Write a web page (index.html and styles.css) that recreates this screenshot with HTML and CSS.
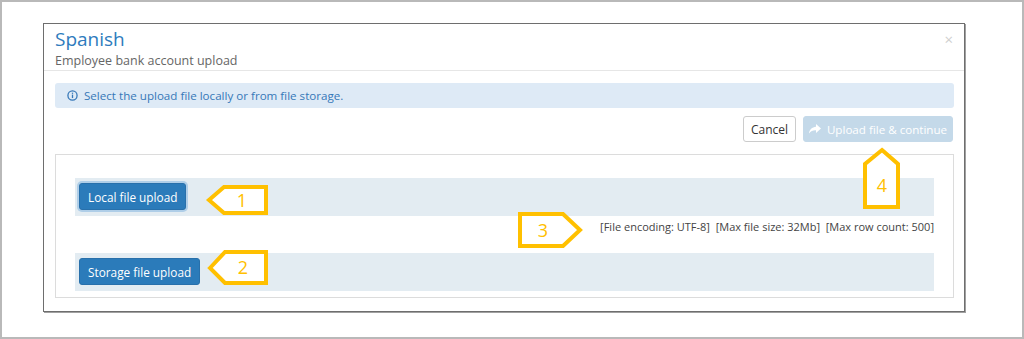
FILE: index.html
```html
<!DOCTYPE html>
<html lang="en">
<head>
<meta charset="utf-8">
<title>Employee bank account upload</title>
<link rel="stylesheet" href="styles.css">
</head>
<body>
<div class="frame">
  <div class="dialog">
    <div class="dialog-header">
      <span class="close">&times;</span>
      <div class="title">Spanish</div>
      <div class="subtitle">Employee bank account upload</div>
    </div>
    <div class="dialog-body">
      <div class="alert">
        <svg class="info-icon" width="11" height="11" viewBox="0 0 12 12"><circle cx="6" cy="6" r="5" fill="none" stroke="#3678b8" stroke-width="1.4"/><rect x="5.3" y="5" width="1.4" height="3.8" fill="#3678b8"/><rect x="5.3" y="2.9" width="1.4" height="1.3" fill="#3678b8"/></svg>
        <span>Select the upload file locally or from file storage.</span>
      </div>
      <div class="actions">
        <button class="btn btn-default">Cancel</button>
        <button class="btn btn-disabled">
          <svg class="share-icon" width="12" height="10" viewBox="0 0 12 10"><path d="M7 0 L12 4.5 L7 9 L7 6.3 C4 6.2 1.8 7 0 9.5 C0.5 5.5 3 3.2 7 2.8 Z" fill="#fff"/></svg>
          <span>Upload file &amp; continue</span>
        </button>
      </div>
      <div class="panel">
        <div class="row">
          <button class="btn btn-primary focus">Local file upload</button>
        </div>
        <div class="info-line">[File encoding: UTF-8]&nbsp; [Max file size: 32Mb]&nbsp; [Max row count: 500]</div>
        <div class="row">
          <button class="btn btn-primary">Storage file upload</button>
        </div>
      </div>
    </div>
  </div>
  <svg class="callouts" width="1024" height="339" viewBox="0 0 1024 339">
    <g fill="#fff" stroke="#ffc000" stroke-width="4" stroke-linejoin="miter">
      <polygon points="209,200 224,187 266,187 266,213 224,213"/>
      <polygon points="210,268 225,252 266,252 266,283 225,283"/>
      <polygon points="520,214 563,214 580,230 563,246 520,246"/>
      <polygon points="882,150 898,164 898,207 865,207 865,164"/>
    </g>
    <g fill="#ffc000" font-family="'Open Sans', sans-serif" font-size="18" text-anchor="middle">
      <text x="242" y="207">1</text>
      <text x="243" y="274">2</text>
      <text x="543" y="237">3</text>
      <text x="882" y="192">4</text>
    </g>
  </svg>
</div>
</body>
</html>
```

FILE: styles.css
```css
* { box-sizing: border-box; }
html, body { margin: 0; padding: 0; background: #fff; }
body { font-family: "Open Sans", "Liberation Sans", sans-serif; }

.frame {
  position: relative;
  width: 1024px;
  height: 339px;
  border: 2px solid #b9b9b9;
  padding: 21px 0 0 41px;
}

.dialog {
  width: 922px;
  height: 289px;
  border: 1px solid #6e6e6e;
  box-shadow: 1px 1px 0 #a0a0a0;
  background: #fff;
}

.dialog-header {
  position: relative;
  height: 47px;
  padding: 3px 11px 0 11px;
  border-bottom: 1px solid #e6e6e6;
}
.title {
  font-size: 19px;
  line-height: 25px;
  color: #2e7bbd;
}
.subtitle {
  font-size: 12.5px;
  line-height: 17px;
  color: #666;
}
.close {
  position: absolute;
  right: 11px;
  top: 5px;
  font-size: 15px;
  color: #cfcfcf;
}

.dialog-body {
  padding: 12px 10px 0 11px;
}

.alert {
  display: flex;
  align-items: center;
  gap: 6px;
  height: 25px;
  padding-left: 12px;
  background: #deeaf6;
  border-radius: 3px;
  color: #3678b8;
  font-size: 11.6px;
}

.actions {
  display: flex;
  justify-content: flex-end;
  gap: 7px;
  margin-top: 8px;
  padding-right: 1px;
}

.btn {
  font-family: "Open Sans", "Liberation Sans", sans-serif;
  font-size: 12px;
  border-radius: 3px;
  height: 26px;
  padding: 0 8px;
  display: inline-flex;
  align-items: center;
  justify-content: center;
  white-space: nowrap;
}
.btn svg { flex-shrink: 0; }
.btn-default {
  background: #fff;
  border: 1px solid #cccccc;
  color: #333;
  width: 53px;
}
.btn-disabled {
  background: #c4d9e9;
  border: 1px solid #c4d9e9;
  color: #fff;
  width: 150px;
  gap: 6px;
  padding: 0 4px;
  font-size: 11.6px;
}
.btn-primary {
  background: #2b7bba;
  border: 1px solid #2870ab;
  color: #fff;
  height: 27px;
  padding: 0 8px;
  font-size: 11.8px;
}
.btn-primary.focus {
  box-shadow: 0 0 0 2px rgba(110, 170, 220, 0.45);
}

.panel {
  margin-top: 12px;
  border: 1px solid #dcdcdc;
  padding: 23px 19px 6px 19px;
}
.row {
  height: 38px;
  padding: 5px 4px;
  background: #e3ecf2;
}
.info-line {
  height: 37px;
  padding-top: 2px;
  line-height: 18px;
  text-align: right;
  font-size: 11px;
  color: #444;
}

.callouts {
  position: absolute;
  left: -2px;
  top: -2px;
}
```
